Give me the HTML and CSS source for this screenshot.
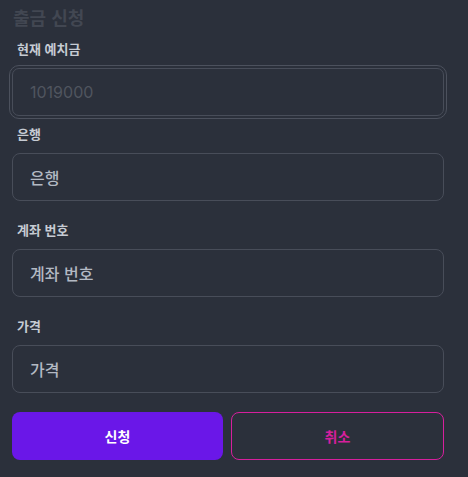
FILE: index.html
```html
<!DOCTYPE html>
<html lang="ko">
<head>
    <meta charset="UTF-8">
    <meta name="viewport" content="width=device-width, initial-scale=1.0">
    <title>출금 신청</title>
    <link rel="stylesheet" href="styles.css">
</head>
<body>

<div class="panel">
    <h3 class="title">출금 신청</h3>

    <div class="field first">
        <label class="label">현재 예치금</label>
        <input class="input locked" type="text" value="1019000" disabled>
    </div>

    <div class="field">
        <label class="label">은행</label>
        <input class="input" type="text" placeholder="은행">
    </div>

    <div class="field">
        <label class="label">계좌 번호</label>
        <input class="input" type="text" placeholder="계좌 번호">
    </div>

    <div class="field">
        <label class="label">가격</label>
        <input class="input" type="text" placeholder="가격">
    </div>

    <div class="actions">
        <button class="btn btn-submit">신청</button>
        <button class="btn btn-cancel">취소</button>
    </div>
</div>

</body>
</html>
```

FILE: styles.css
```css
body { margin: 0; background-color: #2b303b; font-family: "Noto Sans CJK KR", "Noto Sans", sans-serif; }
.panel { padding: 5px 24px 0 12px; }
.title { margin: 0 0 10px 1px; font-size: 18px; line-height: 24px; font-weight: 700; color: #424752; }
.field { display: flex; flex-direction: column; margin-bottom: 19px; }
.field.first { margin-bottom: 8px; }
.label { font-size: 13px; line-height: 20px; font-weight: 700; color: #c6cbd3; margin: 0 0 9px 5px; }
.input {
    box-sizing: border-box;
    width: 100%;
    height: 48px;
    padding: 0 17px;
    border: 1px solid #484d59;
    border-radius: 8px;
    background: transparent;
    color: #c0c5ce;
    font-family: "Noto Sans CJK KR", "Noto Sans", sans-serif;
    font-size: 16px;
    font-weight: 500;
    outline: none;
}
.input::placeholder { color: #b3b9c3; }
.input.locked {
    color: #50555f;
    font-family: Inter, "Noto Sans CJK KR", sans-serif;
    font-weight: 400;
    outline: 1px solid #4c515d;
    outline-offset: 2px;
    border-radius: 7px;
}
.actions { display: flex; gap: 8px; margin-top: 2px; }
.btn {
    flex: 1;
    height: 48px;
    border-radius: 8px;
    font-family: "Noto Sans CJK KR", "Noto Sans", sans-serif;
    font-size: 14px;
    font-weight: 700;
    cursor: pointer;
}
.btn-submit { background-color: #6a17e8; border: none; color: #ffffff; }
.btn-cancel { background: transparent; border: 1px solid #d61f9d; color: #d61f9d; }
```
